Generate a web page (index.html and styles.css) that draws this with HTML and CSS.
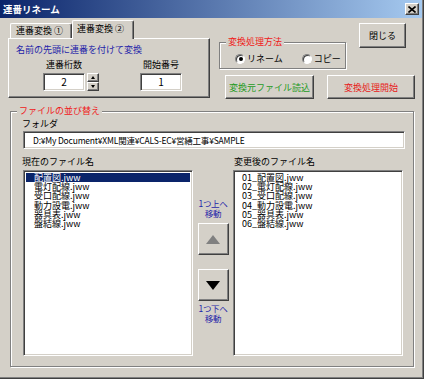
FILE: index.html
```html
<!DOCTYPE html>
<html lang="ja">
<head>
    <meta charset="UTF-8">
    <title>連番リネーム</title>
    <link rel="stylesheet" href="styles.css">
</head>
<body>
<div class="window">
    <div class="titlebar">
        <span class="title">連番リネーム</span>
        <button class="title-close">
            <svg width="8" height="7" viewBox="0 0 8 7"><path d="M0.5 0.5 L7.5 6.5 M7.5 0.5 L0.5 6.5" stroke="#000" stroke-width="1.6"/></svg>
        </button>
    </div>

    <div class="client">
        <div class="top">
            <!-- tabs -->
            <div class="tabs-area">
                <div class="tab-strip">
                    <div class="tab">連番変換 ①</div>
                    <div class="tab active">連番変換 ②</div>
                </div>
                <div class="tab-panel">
                    <div class="panel-title">名前の先頭に連番を付けて変換</div>
                    <div class="fields">
                        <div class="field digits">
                            <div class="field-label">連番桁数</div>
                            <div class="field-row">
                                <div class="edit num">2</div>
                                <div class="spin">
                                    <div class="spin-btn"><span class="arr-up"></span></div>
                                    <div class="spin-btn"><span class="arr-down"></span></div>
                                </div>
                            </div>
                        </div>
                        <div class="field start-no">
                            <div class="field-label">開始番号</div>
                            <div class="edit num">1</div>
                        </div>
                    </div>
                </div>
            </div>

            <!-- right side buttons -->
            <div class="actions">
                <div class="actions-row">
                    <div class="group method">
                        <span class="group-label">変換処理方法</span>
                        <label class="radio"><span class="radio-dot checked"></span>リネーム</label>
                        <label class="radio"><span class="radio-dot"></span>コピー</label>
                    </div>
                    <button class="btn btn-close">閉じる</button>
                </div>
                <div class="actions-row second">
                    <button class="btn btn-load">変換元ファイル読込</button>
                    <button class="btn btn-start">変換処理開始</button>
                </div>
            </div>
        </div>

        <!-- sort group -->
        <div class="group sort">
            <span class="group-label">ファイルの並び替え</span>
            <div class="folder-label">フォルダ</div>
            <div class="edit folder">D:¥My Document¥XML関連¥CALS-EC¥営繕工事¥SAMPLE</div>

            <div class="lists">
                <div class="list-col">
                    <div class="list-label">現在のファイル名</div>
                    <div class="listbox">
                        <div class="item selected">配置図.jww</div>
                        <div class="item">電灯配線.jww</div>
                        <div class="item">受口配線.jww</div>
                        <div class="item">動力設電.jww</div>
                        <div class="item">器具表.jww</div>
                        <div class="item">盤結線.jww</div>
                    </div>
                </div>

                <div class="move-col">
                    <div class="move-text">1つ上へ<br>移動</div>
                    <button class="btn move-btn"><span class="tri-up"></span></button>
                    <button class="btn move-btn down"><span class="tri-down"></span></button>
                    <div class="move-text after">1つ下へ<br>移動</div>
                </div>

                <div class="list-col right">
                    <div class="list-label">変更後のファイル名</div>
                    <div class="listbox">
                        <div class="item">01_配置図.jww</div>
                        <div class="item">02_電灯配線.jww</div>
                        <div class="item">03_受口配線.jww</div>
                        <div class="item">04_動力設電.jww</div>
                        <div class="item">05_器具表.jww</div>
                        <div class="item">06_盤結線.jww</div>
                    </div>
                </div>
            </div>
        </div>
    </div>
</div>
</body>
</html>
```

FILE: styles.css
```css
/* Basic Reset */
* {
    margin: 0;
    padding: 0;
    box-sizing: border-box;
    font-family: "Noto Sans CJK JP", sans-serif;
}

body {
    background: #d4d0c8;
    font-size: 9px;
    color: #000;
}

.window {
    position: relative;
    width: 424px;
    height: 379px;
    background: #d4d0c8;
    border-right: 1px solid #404040;
    border-bottom: 1px solid #404040;
    box-shadow: inset -1px -1px #808080;
}

/* title bar */
.titlebar {
    height: 18px;
    width: 422px;
    display: flex;
    align-items: center;
    padding-left: 3px;
    background: linear-gradient(to right, #0a246a, #a6caf0);
}

.title {
    color: #fff;
    font-weight: bold;
    font-size: 9.5px;
    line-height: 18px;
}

.title-close {
    margin-left: auto;
    margin-right: 3px;
    width: 14px;
    height: 12px;
    display: flex;
    align-items: center;
    justify-content: center;
    background: #d4d0c8;
    border: 1px solid;
    border-color: #fff #404040 #404040 #fff;
    box-shadow: inset -1px -1px #808080;
}

.client {
    padding-left: 8px;
}

.top {
    display: flex;
    height: 82px;
}

/* tabs */
.tabs-area {
    width: 202px;
    margin-top: 2px;
}

.tab-strip {
    display: flex;
    align-items: flex-end;
    height: 18px;
    padding-left: 2px;
}

.tab {
    width: 62px;
    height: 15px;
    line-height: 14px;
    padding-left: 5px;
    border-top: 1px solid #fff;
    border-left: 1px solid #fff;
    border-right: 1px solid #404040;
    box-shadow: inset -1px 0 #808080;
    border-radius: 2px 2px 0 0;
}

.tab.active {
    position: relative;
    height: 19px;
    margin-bottom: -1px;
    background: #d4d0c8;
    line-height: 16px;
    padding-left: 4px;
    z-index: 1;
}

.tab-panel {
    height: 60px;
    border: 1px solid;
    border-color: #fff #404040 #404040 #fff;
    box-shadow: inset -1px -1px #808080;
    padding: 5px 0 0 7px;
}

.panel-title {
    color: #1f1fa8;
    line-height: 11px;
}

.fields {
    display: flex;
    margin-top: 3px;
    padding-left: 27px;
}

.field-label {
    width: 42px;
    text-align: center;
    line-height: 13px;
    margin-bottom: 2px;
}

.field-row {
    display: flex;
}

.start-no {
    margin-left: 41px;
}

.edit {
    background: #fff;
    border: 1px solid;
    border-color: #808080 #fff #fff #808080;
    box-shadow: inset 1px 1px #404040, inset -1px -1px #d4d0c8;
}

.edit.num {
    width: 42px;
    height: 18px;
    line-height: 16px;
    font-size: 10px;
    text-align: center;
}

.spin {
    width: 12px;
    height: 18px;
    margin-left: 2px;
    display: flex;
    flex-direction: column;
}

.spin-btn {
    height: 9px;
    display: flex;
    align-items: center;
    justify-content: center;
    border: 1px solid;
    border-color: #fff #404040 #404040 #fff;
    box-shadow: inset -1px -1px #808080;
}

.arr-up, .arr-down {
    width: 0;
    height: 0;
    border-left: 2.5px solid transparent;
    border-right: 2.5px solid transparent;
}

.arr-up {
    border-bottom: 3px solid #000;
}

.arr-down {
    border-top: 3px solid #000;
}

/* right side */
.actions {
    margin-left: 8px;
}

.actions-row {
    display: flex;
    align-items: flex-start;
}

.group {
    position: relative;
    border: 1px solid #808080;
    box-shadow: 1px 1px #fff, inset 1px 1px #fff;
}

.group-label {
    position: absolute;
    top: -7px;
    left: 6px;
    padding: 0 2px;
    background: #d4d0c8;
    color: #f01818;
    line-height: 12px;
}

.method {
    width: 127px;
    height: 27px;
    margin-top: 24px;
    margin-left: 1px;
    display: flex;
    align-items: center;
    padding: 6px 0 0 15px;
}

.radio {
    display: flex;
    align-items: center;
    gap: 2px;
}

.radio + .radio {
    margin-left: 19px;
}

.radio-dot {
    position: relative;
    width: 10px;
    height: 10px;
    border-radius: 50%;
    background: #fff;
    border: 1px solid;
    border-color: #808080 #fff #fff #808080;
    box-shadow: inset 1px 1px #404040;
}

.radio-dot.checked::after {
    content: "";
    position: absolute;
    left: 2.5px;
    top: 2.5px;
    width: 4px;
    height: 4px;
    border-radius: 50%;
    background: #000;
}

.btn {
    background: #d4d0c8;
    font-size: 9px;
    border: 1px solid;
    border-color: #fff #404040 #404040 #fff;
    box-shadow: inset -1px -1px #808080;
    display: flex;
    align-items: center;
    justify-content: center;
}

.btn-close {
    width: 47px;
    height: 25px;
    margin-top: 5px;
    margin-left: 13px;
}

.actions-row.second {
    margin-top: 6px;
}

.btn-load {
    width: 89px;
    height: 24px;
    margin-left: 7px;
    color: #1d9a1d;
}

.btn-start {
    width: 88px;
    height: 24px;
    margin-left: 13px;
    color: #e81818;
}

/* sort group */
.sort {
    width: 404px;
    height: 256px;
    margin-top: 11px;
    margin-left: 2px;
    padding: 6px 0 0 11px;
}

.folder-label {
    line-height: 12px;
}

.edit.folder {
    width: 382px;
    height: 18px;
    margin-top: 1px;
    margin-left: 1px;
    padding-left: 9px;
    line-height: 16px;
    font-size: 8.5px;
    letter-spacing: -0.2px;
}

.lists {
    display: flex;
    margin-top: 7px;
    margin-left: 1px;
}

.list-col {
    width: 170px;
}

.list-col.right .list-label {
    margin-left: 1px;
}

.list-label {
    line-height: 12px;
    margin-left: -1px;
    margin-bottom: 2px;
}

.listbox {
    height: 186px;
    background: #fff;
    border: 1px solid;
    border-color: #808080 #fff #fff #808080;
    box-shadow: inset 1px 1px #404040, inset -1px -1px #d4d0c8;
    padding: 2px;
    font-size: 9px;
}

.item {
    height: 9.2px;
    line-height: 9.2px;
    padding-left: 8px;
    white-space: nowrap;
}

.right .item {
    padding-left: 6px;
}

.item.selected {
    background: #0a246a;
    color: #fff;
}

.move-col {
    width: 40px;
    display: flex;
    flex-direction: column;
    align-items: center;
    padding-top: 42px;
}

.move-text {
    color: #1f1fa8;
    text-align: center;
    font-size: 8.5px;
    line-height: 10px;
    letter-spacing: -0.3px;
}

.move-btn {
    width: 31px;
    height: 32px;
    margin-top: 5px;
}

.move-btn.down {
    margin-top: 14px;
}

.move-text.after {
    margin-top: 2px;
}

.tri-up, .tri-down {
    width: 0;
    height: 0;
    border-left: 7px solid transparent;
    border-right: 7px solid transparent;
}

.tri-up {
    border-bottom: 9px solid #808080;
}

.tri-down {
    border-top: 9px solid #000;
}
```
